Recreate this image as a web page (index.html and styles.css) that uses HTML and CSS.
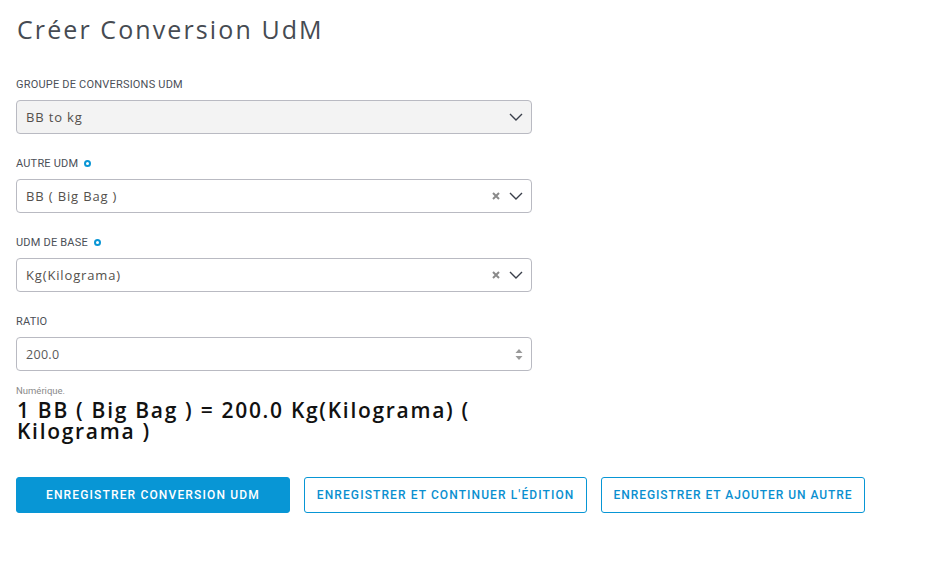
FILE: index.html
```html
<!DOCTYPE html>
<html lang="fr">
<head>
<meta charset="utf-8">
<title>Créer Conversion UdM</title>
<link rel="stylesheet" href="styles.css">
</head>
<body>
<div class="page">
  <h1 class="title">Créer Conversion UdM</h1>
  <form class="form">
    <div class="field">
      <label class="label">GROUPE DE CONVERSIONS UDM</label>
      <div class="control control-disabled">
        <span class="value">BB to kg</span>
        <span class="icons">
          <svg class="chev" width="14" height="8" viewBox="0 0 14 8"><path d="M1 1 L7 7 L13 1" fill="none" stroke="#3a3f4a" stroke-width="1.4"/></svg>
        </span>
      </div>
    </div>
    <div class="field">
      <label class="label">AUTRE UDM <span class="req"></span></label>
      <div class="control">
        <span class="value">BB ( Big Bag )</span>
        <span class="icons">
          <svg class="clear" width="8" height="8" viewBox="0 0 8 8"><path d="M1 1 L7 7 M7 1 L1 7" stroke="#8a8a8a" stroke-width="2"/></svg>
          <svg class="chev" width="14" height="8" viewBox="0 0 14 8"><path d="M1 1 L7 7 L13 1" fill="none" stroke="#3a3f4a" stroke-width="1.4"/></svg>
        </span>
      </div>
    </div>
    <div class="field">
      <label class="label">UDM DE BASE <span class="req"></span></label>
      <div class="control">
        <span class="value">Kg(Kilograma)</span>
        <span class="icons">
          <svg class="clear" width="8" height="8" viewBox="0 0 8 8"><path d="M1 1 L7 7 M7 1 L1 7" stroke="#8a8a8a" stroke-width="2"/></svg>
          <svg class="chev" width="14" height="8" viewBox="0 0 14 8"><path d="M1 1 L7 7 L13 1" fill="none" stroke="#3a3f4a" stroke-width="1.4"/></svg>
        </span>
      </div>
    </div>
    <div class="field field-ratio">
      <label class="label">RATIO</label>
      <div class="control">
        <span class="value value-num">200.0</span>
        <span class="icons">
          <svg class="spin" width="8" height="13" viewBox="0 0 8 13"><path d="M4 1 L7.5 5 L0.5 5 Z M0.5 8 L7.5 8 L4 12 Z" fill="#9a9a9a"/></svg>
        </span>
      </div>
      <div class="help">Numérique.</div>
    </div>
    <div class="summary">1 BB ( Big Bag ) = 200.0 Kg(Kilograma) ( Kilograma )</div>
  </form>
  <div class="actions">
    <button class="btn btn-primary" type="button">ENREGISTRER CONVERSION UDM</button>
    <button class="btn btn-outline" type="button">ENREGISTRER ET CONTINUER L'ÉDITION</button>
    <button class="btn btn-outline btn-tight" type="button">ENREGISTRER ET AJOUTER UN AUTRE</button>
  </div>
</div>
</body>
</html>
```
FILE: styles.css
```css
* { box-sizing: border-box; }
html, body { margin: 0; padding: 0; background: #fff; }
body { font-family: "Open Sans", "Noto Sans", sans-serif; color: #444; }

.page { padding: 12px 16px 0 16px; }

.title {
  margin: 0 0 0 1px;
  font-family: "Open Sans", sans-serif;
  font-weight: 400;
  font-size: 25px;
  line-height: 34px;
  letter-spacing: 2.1px;
  color: #464b52;
}

.form { width: 516px; margin-top: 32px; }

.field { display: flex; flex-direction: column; margin-bottom: 23px; }
.field-ratio { margin-bottom: 0; }

.label {
  display: flex;
  align-items: center;
  gap: 6px;
  font-family: "Roboto", sans-serif;
  font-size: 11px;
  font-weight: 400;
  line-height: 13px;
  letter-spacing: 0.2px;
  color: #4b4f57;
  margin-bottom: 9px;
}
.req {
  width: 7px; height: 7px;
  border: 2px solid #0a96d5;
  border-radius: 50%;
}

.control {
  height: 34px;
  border: 1px solid #b9bac2;
  border-radius: 4px;
  display: flex;
  align-items: center;
  justify-content: space-between;
  padding: 0 8px 0 9px;
  background: #fff;
}
.control-disabled { background: #f3f3f3; }

.value {
  font-size: 13px;
  letter-spacing: 0.85px;
  color: #54504c;
}
.value-num { font-size: 12.5px; letter-spacing: 0.3px; color: #5a5a5a; }

.icons { display: flex; align-items: center; gap: 9px; }
.clear { display: block; }
.chev { display: block; }
.spin { display: block; }

.help {
  margin-top: 14px;
  font-family: "Roboto", sans-serif;
  font-size: 9.5px;
  line-height: 11px;
  color: #8a8a8a;
}

.summary {
  margin-top: 4px;
  margin-left: 1px;
  font-family: "Open Sans", sans-serif;
  font-weight: 600;
  font-size: 21px;
  line-height: 21px;
  letter-spacing: 1.7px;
  color: #111;
}

.actions { display: flex; gap: 14px; margin-top: 35px; }

.btn {
  height: 36px;
  border-radius: 3px;
  font-family: "Roboto", sans-serif;
  font-weight: 500;
  font-size: 12px;
  letter-spacing: 1.15px;
  padding: 0 12px;
  cursor: pointer;
}
.btn-primary {
  background: #0896d5;
  border: 1px solid #0896d5;
  color: #fff;
  padding: 0 29px;
}
.btn-outline {
  background: #fff;
  border: 1px solid #0896d5;
  color: #0a8fd0;
  letter-spacing: 1.1px;
}
.btn-tight { letter-spacing: 0.95px; padding: 0 11px; }
```
